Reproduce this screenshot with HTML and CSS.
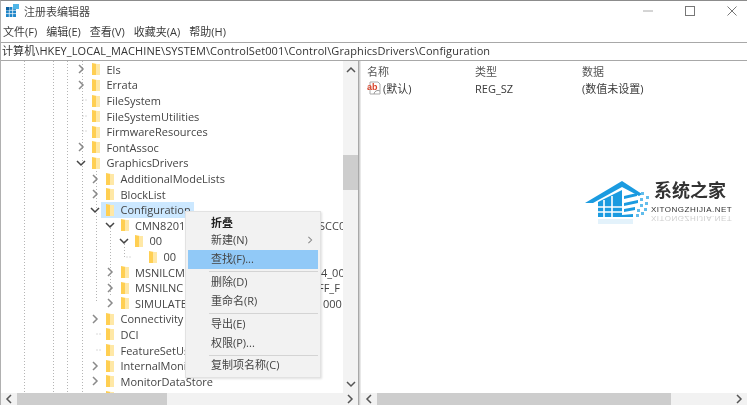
FILE: index.html
```html
<!DOCTYPE html>
<html lang="zh-CN">
<head>
<meta charset="utf-8">
<title>注册表编辑器</title>
<link rel="stylesheet" href="styles.css">
</head>
<body>
<svg class="sprite" aria-hidden="true">
  <symbol id="right" viewBox="0 0 10 10"><path d="M3 1l4 4-4 4" fill="none" stroke="#8a8a8a" stroke-width="1.5"/></symbol>
  <symbol id="down" viewBox="0 0 10 10"><path d="M1 3l4 4 4-4" fill="none" stroke="#444" stroke-width="1.5"/></symbol>
  <symbol id="folder" viewBox="0 0 8 12"><path d="M0 0l5 1v11H0z" fill="#ffcf52"/><path d="M4 1h4v11H4z" fill="#ffe8a6"/></symbol>
</svg>
<div class="window">
  <header class="titlebar">
    <svg class="appicon" viewBox="0 0 13 13"><path d="M0 3h10v10H0z" fill="#1f86c9"/><path d="M3.3 3v10M6.6 3v10M0 6.3h10M0 9.6h10" stroke="#fff" stroke-width=".7"/><path d="M7 0h6v5H7z" fill="#4fb6e8"/><path d="M0 3h3.3v3.3H0z" fill="#0d5f9e"/></svg>
    <span class="apptitle">注册表编辑器</span>
    <div class="winctrls">
      <svg viewBox="0 0 10 10"><path d="M0 5h10" stroke="#aaa" stroke-width="1"/></svg>
      <svg viewBox="0 0 10 10"><rect x=".5" y=".5" width="9" height="9" fill="none" stroke="#777"/></svg>
      <svg viewBox="0 0 10 10"><path d="M.5.5l9 9M9.5.5l-9 9" stroke="#777" stroke-width="1"/></svg>
    </div>
  </header>
  <nav class="menubar">
    <span>文件(F)</span><span>编辑(E)</span><span>查看(V)</span><span>收藏夹(A)</span><span>帮助(H)</span>
  </nav>
  <div class="address">计算机\HKEY_LOCAL_MACHINE\SYSTEM\ControlSet001\Control\GraphicsDrivers\Configuration</div>
  <main class="panes">
    <section class="leftpane">
      <div class="treewrap">
        <div class="tree">
          <svg class="guides" width="342" height="332" aria-hidden="true">
            <g stroke="#b5b5b5" stroke-dasharray="1 2" fill="none">
              <path d="M24.5 0v332M53.5 0v332M67.5 0v332M82.5 0v332"/>
              <path d="M96.5 110v132M110.5 164v70M124.5 180v16h6"/>
              <path d="M82.5 39h6M82.5 55h6M82.5 70h6M96.5 273h6M96.5 289h6"/>
            </g>
          </svg>
          <div class="row l1"><svg class="chev"><use href="#right"/></svg><svg class="fold"><use href="#folder"/></svg><span>Els</span></div>
          <div class="row l1"><svg class="chev"><use href="#right"/></svg><svg class="fold"><use href="#folder"/></svg><span>Errata</span></div>
          <div class="row l1"><i class="chev"></i><svg class="fold"><use href="#folder"/></svg><span>FileSystem</span></div>
          <div class="row l1"><i class="chev"></i><svg class="fold"><use href="#folder"/></svg><span>FileSystemUtilities</span></div>
          <div class="row l1"><i class="chev"></i><svg class="fold"><use href="#folder"/></svg><span>FirmwareResources</span></div>
          <div class="row l1"><svg class="chev"><use href="#right"/></svg><svg class="fold"><use href="#folder"/></svg><span>FontAssoc</span></div>
          <div class="row l1"><svg class="chev"><use href="#down"/></svg><svg class="fold"><use href="#folder"/></svg><span>GraphicsDrivers</span></div>
          <div class="row l2"><svg class="chev"><use href="#right"/></svg><svg class="fold"><use href="#folder"/></svg><span>AdditionalModeLists</span></div>
          <div class="row l2"><svg class="chev"><use href="#right"/></svg><svg class="fold"><use href="#folder"/></svg><span>BlockList</span></div>
          <div class="row l2 selected"><svg class="chev"><use href="#down"/></svg><svg class="fold"><use href="#folder"/></svg><span>Configuration</span></div>
          <div class="row l3"><svg class="chev"><use href="#down"/></svg><svg class="fold"><use href="#folder"/></svg><span class="head h1">CMN8201</span><span>SCC0</span></div>
          <div class="row l4"><svg class="chev"><use href="#down"/></svg><svg class="fold"><use href="#folder"/></svg><span>00</span></div>
          <div class="row l5"><i class="chev"></i><svg class="fold"><use href="#folder"/></svg><span>00</span></div>
          <div class="row l3"><svg class="chev"><use href="#right"/></svg><svg class="fold"><use href="#folder"/></svg><span class="head h2">MSNILCM</span><span>4_00</span></div>
          <div class="row l3"><svg class="chev"><use href="#right"/></svg><svg class="fold"><use href="#folder"/></svg><span class="head h3">MSNILNC</span><span>FF_F</span></div>
          <div class="row l3"><svg class="chev"><use href="#right"/></svg><svg class="fold"><use href="#folder"/></svg><span class="head h4">SIMULATED</span><span>000</span></div>
          <div class="row l2"><svg class="chev"><use href="#right"/></svg><svg class="fold"><use href="#folder"/></svg><span>Connectivity</span></div>
          <div class="row l2"><i class="chev"></i><svg class="fold"><use href="#folder"/></svg><span>DCI</span></div>
          <div class="row l2"><i class="chev"></i><svg class="fold"><use href="#folder"/></svg><span>FeatureSetUsage</span></div>
          <div class="row l2"><svg class="chev"><use href="#right"/></svg><svg class="fold"><use href="#folder"/></svg><span>InternalMonitor</span></div>
          <div class="row l2"><svg class="chev"><use href="#right"/></svg><svg class="fold"><use href="#folder"/></svg><span>MonitorDataStore</span></div>
          <div class="row l2"><i class="chev"></i><svg class="fold"><use href="#folder"/></svg></div>
        </div>
        <div class="vscroll">
          <svg class="arrow" viewBox="0 0 10 10"><path d="M1 7l4-4 4 4" fill="none" stroke="#555" stroke-width="1.5"/></svg>
          <div class="vtrack"><div class="vthumb"></div></div>
          <svg class="arrow" viewBox="0 0 10 10"><path d="M1 3l4 4 4-4" fill="none" stroke="#555" stroke-width="1.5"/></svg>
        </div>
      </div>
      <div class="hscroll">
        <svg class="arrow" viewBox="0 0 10 10"><path d="M7 1L3 5l4 4" fill="none" stroke="#555" stroke-width="1.5"/></svg>
        <div class="htrack"><div class="hthumb leftthumb"></div></div>
        <svg class="arrow" viewBox="0 0 10 10"><path d="M3 1l4 4-4 4" fill="none" stroke="#555" stroke-width="1.5"/></svg>
      </div>
    </section>
    <div class="splitter"></div>
    <section class="rightpane">
      <div class="listhead"><span class="c1">名称</span><span class="c2">类型</span><span class="c3">数据</span></div>
      <div class="listrow">
        <span class="c1 namecell">
          <svg class="abicon" viewBox="0 0 14 14"><path d="M3 1h8l2 2v10H3z" fill="#fff" stroke="#aaa"/><path d="M7 13a4 4 0 0 1 6-3" fill="none" stroke="#999"/><text x="0" y="8.5" class="abtext">ab</text></svg>
          (默认)
        </span>
        <span class="c2">REG_SZ</span><span class="c3">(数值未设置)</span>
      </div>
      <div class="listspace"></div>
      <div class="hscroll">
        <svg class="arrow" viewBox="0 0 10 10"><path d="M7 1L3 5l4 4" fill="none" stroke="#555" stroke-width="1.5"/></svg>
        <div class="htrack"><div class="hthumb rightthumb"></div></div>
        <svg class="arrow" viewBox="0 0 10 10"><path d="M3 1l4 4-4 4" fill="none" stroke="#555" stroke-width="1.5"/></svg>
      </div>
    </section>
  </main>
  <ul class="ctxmenu">
    <li class="item bold">折叠</li>
    <li class="item sub">新建(N)<svg class="subarrow" viewBox="0 0 10 10"><path d="M3 1l4 4-4 4" fill="none" stroke="#888" stroke-width="1.3"/></svg></li>
    <li class="item hot">查找(F)...</li>
    <li class="sep"></li>
    <li class="item">删除(D)</li>
    <li class="item">重命名(R)</li>
    <li class="sep"></li>
    <li class="item">导出(E)</li>
    <li class="item">权限(P)...</li>
    <li class="sep"></li>
    <li class="item last">复制项名称(C)</li>
  </ul>
  <div class="logo">
    <svg class="house" viewBox="0 0 66 56" aria-hidden="true">
      <path d="M0 27L37 5l20 13-3 2-17-9L8 27z" fill="#1b9be0"/>
      <path d="M13 26l24-12v27H13z" fill="#1b9be0"/>
      <path d="M19 24v17M27 20v21M13 31h24M13 36h24" stroke="#fff" stroke-width="1.6"/>
      <path d="M39 20l13-3v3l-13 3zM39 27l14-3v3l-14 3zM39 33l11-2v3l-11 2zM37 39l11-1v3H37z" fill="#1b9be0"/>
      <path d="M56 16h3v3h-3zM61 20h3v3h-3zM55 22h3v3h-3zM60 26h3v3h-3zM55 28h3v3h-3zM59 32h3v3h-3zM52 33h3v3h-3zM56 36h3v3h-3zM51 38h3v3h-3z" fill="#62bdec"/>
      <path d="M13 43h35v5H13z" fill="#e3f2fb"/>
    </svg>
    <div class="brand">
      <div class="brandcn">系统之家</div>
      <div class="branden">XITONGZHIJIA.NET</div>
      <div class="brandflip">XITONGZHIJIA.NET</div>
    </div>
  </div>
</div>
</body>
</html>
```
FILE: styles.css
```css
* { box-sizing: border-box; }
html, body { margin: 0; padding: 0; background: #fff; }
body { width: 747px; height: 405px; overflow: hidden; font-family: "Open Sans", "Noto Sans CJK SC", sans-serif; font-size: 11px; color: #3a3a3a; }
.sprite { position: absolute; width: 0; height: 0; }
.window { position: relative; width: 747px; height: 405px; display: flex; flex-direction: column; background: #fff; border-top: 1px solid #8c8c8c; border-left: 1px solid #b0b0b0; filter: blur(0.45px); overflow: hidden; }

.titlebar { height: 21px; display: flex; align-items: center; padding: 0 0 2px 5px; flex: none; }
.appicon { width: 13px; height: 13px; margin-right: 5px; }
.apptitle { font-size: 11px; color: #444; }
.winctrls { margin-left: auto; display: flex; gap: 32px; padding-right: 10px; }
.winctrls svg { width: 10px; height: 10px; }

.menubar { height: 20px; display: flex; align-items: center; padding: 0 0 2px 2px; gap: 9px; flex: none; }
.address { height: 19px; flex: none; border-top: 1px solid #a8a8a8; border-bottom: 1px solid #a8a8a8; padding-left: 1px; line-height: 16px; white-space: nowrap; font-size: 11px; letter-spacing: .09px; color: #333; }

.panes { flex: 1; display: flex; min-height: 0; }
.leftpane { width: 357px; flex: none; display: flex; flex-direction: column; }
.splitter { width: 3px; flex: none; background: #d0d0d0; border-left: 1px solid #a8a8a8; border-right: 1px solid #e8e8e8; }
.rightpane { flex: 1; display: flex; flex-direction: column; min-width: 0; }

.treewrap { flex: 1; display: flex; min-height: 0; }
.tree { position: relative; flex: 1; overflow: hidden; min-width: 0; padding-top: .6px; }
.guides { position: absolute; left: -1px; top: 0; }
.row { position: relative; height: 15.6px; display: flex; align-items: center; white-space: nowrap; color: #444; width: 342px; overflow: hidden; }
.l1 { padding-left: 75px; }
.l2 { padding-left: 89px; }
.l3 { padding-left: 103.5px; }
.l4 { padding-left: 118px; }
.l5 { padding-left: 132px; }
.chev { display: block; width: 10px; height: 10px; margin-right: 6px; flex: none; }
.fold { width: 8px; height: 12px; margin-right: 6.5px; flex: none; }
.selected { width: 193px; background: linear-gradient(90deg, transparent 0 100px, #cce8ff 100px); }
.head { flex: none; }
.h1 { width: 184px; }
.h2 { width: 186px; }
.h3 { width: 183px; }
.h4 { width: 188px; }

.vscroll { width: 15px; flex: none; display: flex; flex-direction: column; background: #f3f3f3; }
.vtrack { flex: 1; padding-top: 76px; }
.vthumb { height: 35px; background: #cdcdcd; }
.arrow { width: 10px; height: 10px; flex: none; margin: 3px 2.5px; }
.vscroll .arrow { margin: 4px 2.5px; }

.hscroll { height: 12px; flex: none; display: flex; align-items: center; background: #f2f2f2; }
.hscroll .arrow { margin: 0 3px; }
.htrack { flex: 1; height: 12px; }
.hthumb { height: 12px; background: #cdcdcd; }
.leftthumb { width: 150px; }
.rightthumb { width: 294px; }

.listhead, .listrow { display: flex; align-items: center; padding-left: 6px; flex: none; }
.listhead { height: 20px; color: #555; }
.listrow { height: 14px; }
.c1 { width: 108px; }
.c2 { width: 107px; }
.namecell { display: flex; align-items: center; gap: 2px; }
.abicon { width: 14px; height: 14px; }
.abtext { font-family: "Liberation Sans", sans-serif; font-size: 9px; font-weight: 700; fill: #d8432a; }
.listspace { flex: 1; }

.ctxmenu { position: absolute; left: 184px; top: 210px; width: 136px; height: 167px; margin: 0; padding: 2px 2px; list-style: none; background: #f2f2f2; border: 1px solid #e2e2e2; box-shadow: 1px 1px 2px rgba(0,0,0,.12); }
.item { position: relative; height: 19px; line-height: 18px; padding-left: 23px; color: #444; }
.bold { font-weight: 700; color: #222; }
.hot { background: #91c9f7; }
.subarrow { position: absolute; right: 4px; top: 5px; width: 8px; height: 8px; }
.sep { height: 1px; margin: 2px 0 1px 21px; background: #d4d4d4; }
.item:first-child { height: 17px; }
.last { margin-top: -1px; }

.logo { position: absolute; left: 584px; top: 175px; display: flex; align-items: flex-start; }
.house { width: 66px; height: 56px; }
.brand { padding-top: 4px; }
.brandcn { font-size: 18px; line-height: 21px; font-weight: 700; color: #333; padding-left: 3px; white-space: nowrap; }
.branden, .brandflip { font-family: "Liberation Sans", sans-serif; font-size: 8px; line-height: 9px; letter-spacing: .5px; color: #333; white-space: nowrap; }
.branden { margin-top: 4px; }
.brandflip { transform: scaleY(-1); opacity: .25; }
```
